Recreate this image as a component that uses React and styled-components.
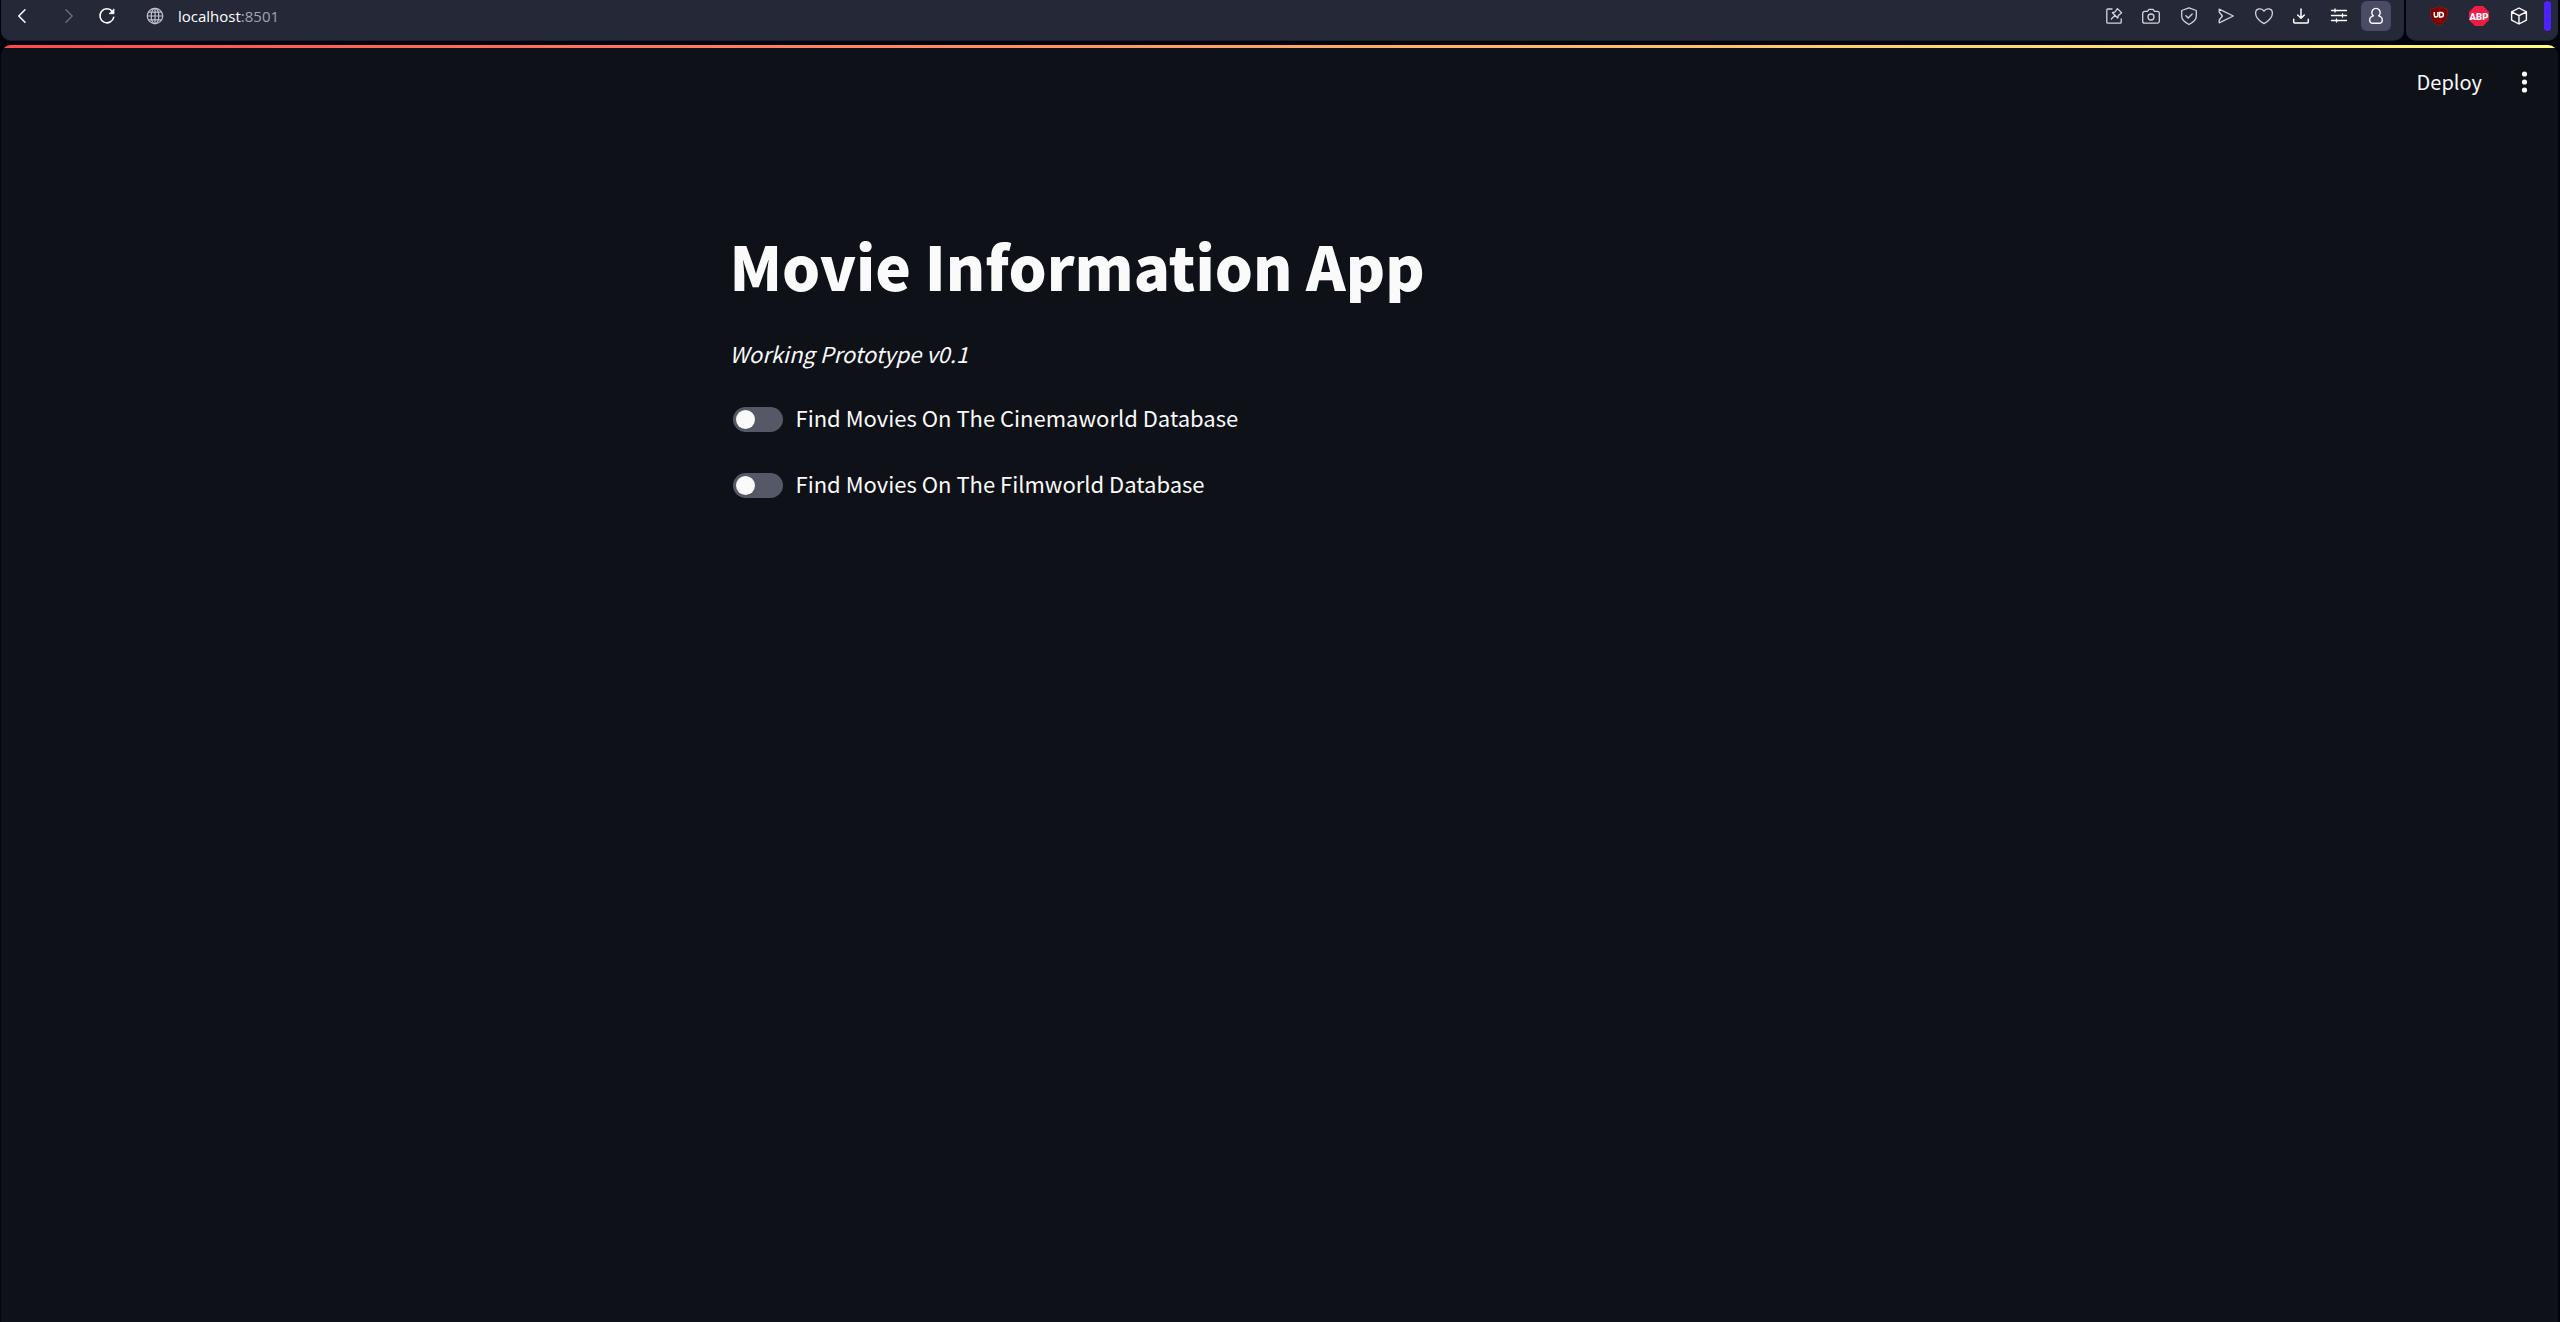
import React from "react";
import styled, { createGlobalStyle } from "styled-components";

const GlobalStyle = createGlobalStyle`
  * { box-sizing: border-box; }
  body { margin: 0; background: #02030f; }
  button, input, label { font-family: inherit; }
`;

const Window = styled.div`
  min-height: 100vh;
  display: flex;
  flex-direction: column;
  padding: 0 2px 0 1px;
  font-family: "Noto Sans CJK SC", "Noto Sans", sans-serif;
  color: #fafafa;
`;

const BrowserBar = styled.div`
  display: flex;
  gap: 2px;
`;

const BarPanel = styled.div`
  display: flex;
  align-items: center;
  flex: ${(p) => (p.$grow ? "1" : "none")};
  height: 41px;
  padding: ${(p) => (p.$grow ? "1px 9px 10px 6px" : "1px 7px 10px 13px")};
  background: #252837;
  border-bottom: 1px solid #1a1d2b;
  border-radius: 0 0 10px 10px;
`;

const IconButton = styled.button`
  display: grid;
  place-items: center;
  width: 30px;
  height: 30px;
  padding: 0;
  border: 0;
  border-radius: 6px;
  background: ${(p) => (p.$active ? "#494c64" : "transparent")};
  color: ${(p) => p.$color || "#d3d5dc"};
`;

const NavGroup = styled.div`
  display: flex;
  gap: ${(p) => p.$gap};
  margin-right: ${(p) => p.$after};
`;

const AddressLink = styled.a`
  flex: 1;
  font: 15px/22px "Open Sans", "Noto Sans", sans-serif;
  color: #fff;
  text-decoration: none;
`;

const Port = styled.span`
  color: #9fa5b4;
`;

const IconStrip = styled.div`
  display: grid;
  grid-template-columns: repeat(${(p) => p.$count}, 1fr);
  justify-items: center;
  width: ${(p) => p.$width};
`;

const SideHandle = styled.div`
  width: 7px;
  height: 30px;
  margin-left: 5px;
  border-radius: 4px;
  background: #4d22ff;
`;

const Page = styled.div`
  flex: 1;
  margin-top: 4px;
  border-radius: 10px 10px 0 0;
  overflow: hidden;
  background: #0e1117;
`;

const Decoration = styled.div`
  height: 3px;
  background: linear-gradient(90deg, #ff4b4b, #fffd80);
`;

const Toolbar = styled.header`
  display: flex;
  justify-content: flex-end;
  align-items: center;
  gap: 28px;
  height: 68px;
  padding-right: 18px;
`;

const DeployButton = styled.button`
  padding: 0;
  border: 0;
  background: transparent;
  color: inherit;
  font-size: 20px;
  line-height: 32px;
`;

const Main = styled.main`
  display: flex;
  flex-direction: column;
  width: 100%;
  max-width: 1100px;
  margin: 0 auto;
  padding-top: 109px;
`;

const Title = styled.h1`
  margin: 0;
  font-size: 60px;
  font-weight: 900;
  line-height: 80px;
`;

const Subtitle = styled.p`
  margin: 32px 0 0;
  font-size: 22px;
  font-style: italic;
  line-height: 32px;
`;

const ToggleList = styled.div`
  display: flex;
  flex-direction: column;
  gap: 34px;
  margin-top: 32px;
`;

const ToggleRow = styled.label`
  display: flex;
  align-items: center;
  gap: 13px;
  padding-left: 3px;
  font-size: 22px;
  line-height: 32px;
`;

const ToggleInput = styled.input`
  appearance: none;
  width: 50px;
  height: 25px;
  margin: 4px 0 0;
  padding: 3px;
  border-radius: 13px;
  background: #555867;

  &::before {
    content: "";
    display: block;
    width: 19px;
    height: 19px;
    border-radius: 50%;
    background: #fafafa;
  }

  &:checked {
    background: #ff4b4b;
  }

  &:checked::before {
    margin-left: 25px;
  }
`;

const Glyph = ({ children, width = 1.3 }) => (
  <svg width="20" height="20" viewBox="0 0 20 20" fill="none" stroke="currentColor" strokeWidth={width} strokeLinecap="round" strokeLinejoin="round" aria-hidden="true">
    {children}
  </svg>
);

const icons = {
  back: <Glyph width={1.5}><path d="M13 3.8 6.8 10l6.2 6.2" /></Glyph>,
  forward: <Glyph width={1.5}><path d="M7 3.8 13.2 10 7 16.2" /></Glyph>,
  reload: <Glyph width={1.6}><path d="M16.8 11.2A7 7 0 1 1 15.4 5.4" /><path d="M17 3.2v4.5h-4.5z" fill="currentColor" strokeWidth=".8" /></Glyph>,
  globe: <Glyph width={1.2}><circle cx="10" cy="10" r="7.7" /><ellipse cx="10" cy="10" rx="3.8" ry="7.7" /><path d="M10 2.3v15.4M2.3 10h15.4M3.5 6.2h13M3.5 13.8h13" /></Glyph>,
  pin: <Glyph><path d="M8 3H3.8a1 1 0 0 0-1 1v12.2a1 1 0 0 0 1 1h12.4a1 1 0 0 0 1-1V13" /><path d="m13.4 2.6 4.2 4.2-3.2 2.6-.7 2.6-5.300-5.300 2.600-.7zM10.900 9.400 7.300 13" /></Glyph>,
  camera: <Glyph><path d="M6.4 5.4 8 3.3h4l1.6 2.1h2.7a2 2 0 0 1 2 2v7.8a2 2 0 0 1-2 2H3.7a2 2 0 0 1-2-2V7.4a2 2 0 0 1 2-2z" /><circle cx="10" cy="11" r="3" /></Glyph>,
  shield: <Glyph><path d="m10 1.8 7.3 2.7v5.7c0 3.6-3 6-7.3 8.3-4.3-2.3-7.3-4.7-7.3-8.3V4.5z" /><path d="m6.9 9.7 2.3 2.3 4-4" /></Glyph>,
  send: <Glyph><path d="M3.2 3.2 17.3 10 3.2 16.8V14L6.4 10 3.2 6z" /></Glyph>,
  heart: <Glyph><path d="M10 17.6C6.5 15.6 1.6 11.8 1.6 7.2c0-4.9 6.2-5.8 8.4-2 2.2-3.8 8.4-2.9 8.4 2 0 4.6-4.9 8.4-8.4 10.4z" /></Glyph>,
  download: <Glyph width={1.5}><path d="M10 3v9M6.7 9l3.3 3.3L13.3 9M2.7 13.2V16a1 1 0 0 0 1 1h12.6a1 1 0 0 0 1-1v-2.8" /></Glyph>,
  sliders: <Glyph width={1.3}><path d="M2.5 4.5h15M2.5 9.5h15M2.5 14.500h15M6 3v3M13.500 8v3M7.500 13v3" /></Glyph>,
  person: <Glyph width={1.4}><path d="M7.400 9.900a4.200 4.200 0 1 1 5.200 0c2.300.5 3.700 1.800 3.700 4 0 2-1.300 3.400-3.300 3.400H7c-2 0-3.300-1.400-3.300-3.400 0-2.200 1.400-3.500 3.700-4z" /></Glyph>,
  cube: <Glyph width={1.4}><path d="m10 2 7.4 3.8v8.4L10 18l-7.4-3.8V5.8zM2.6 5.8 10 9.7l7.4-3.9M10 9.7V18" /></Glyph>,
  blocker: (
    <svg width="20" height="20" viewBox="0 0 20 20" aria-hidden="true">
      <path d="M10 .3c2.5 1.7 5.5 2.4 8.5 2.5 0 7.7.2 12.2-8.5 16.900C1.300 15 1.500 10.500 1.500 2.800 4.500 2.700 7.500 2 10 .3z" fill="#800000" stroke="#6b262d" strokeWidth=".8" />
      <path d="M5.300 6v3.200a1.800 1.800 0 0 0 3.600 0V6" fill="none" stroke="#fff" strokeWidth="1.5" />
      <path d="M10.500 6.500h1.700a2.200 2.200 0 0 1 0 4.400h-1.700z" fill="none" stroke="#fff" strokeWidth="1.5" />
    </svg>
  ),
  abp: (
    <svg width="20" height="20" viewBox="0 0 20 20" aria-hidden="true">
      <path d="M5.9 0h8.2L20 5.9v8.2L14.1 20H5.900L0 14.100V5.900z" fill="#ed1e45" />
      <text x="10" y="13.500" textAnchor="middle" fontFamily="Roboto, sans-serif" fontWeight="900" fontSize="9.500" fill="#fff">ABP</text>
    </svg>
  ),
  menu: (
    <svg width="30" height="30" viewBox="0 0 30 30" fill="currentColor" aria-hidden="true">
      <circle cx="14.500" cy="7" r="2.600" /><circle cx="14.500" cy="15" r="2.600" /><circle cx="14.500" cy="23" r="2.600" />
    </svg>
  ),
};

const tools = [
  ["Edit", "pin"],
  ["Snapshot", "camera"],
  ["Protection", "shield"],
  ["Send", "send"],
  ["Favourite", "heart"],
  ["Downloads", "download", "#fff"],
  ["Easy setup", "sliders", "#fff"],
  ["Profile", "person", "#fff"],
];

const extensions = [
  ["Content blocker", "blocker"],
  ["Ad blocker", "abp"],
  ["Extensions", "cube", "#fff"],
];

const Tool = ({ item: [label, icon, color] }) => (
  <IconButton type="button" aria-label={label} $color={color} $active={icon === "person"}>
    {icons[icon]}
  </IconButton>
);

const toggles = [
  ["cinemaworld", "Find Movies On The Cinemaworld Database"],
  ["filmworld", "Find Movies On The Filmworld Database"],
];

export default function App() {
  return (
    <Window>
      <GlobalStyle />
      <BrowserBar>
        <BarPanel $grow>
          <NavGroup $gap="17px" $after="8px">
            <Tool item={["Back", "back", "#fff"]} />
            <Tool item={["Forward", "forward", "#686b7a"]} />
          </NavGroup>
          <NavGroup $gap="18px" $after="8px">
            <Tool item={["Reload", "reload", "#fff"]} />
            <Tool item={["Site information", "globe", "#bfc2cc"]} />
          </NavGroup>
          <AddressLink href="#">localhost<Port>:8501</Port></AddressLink>
          <IconStrip $count={8} $width="300px">
            {tools.map((t) => <Tool key={t[0]} item={t} />)}
          </IconStrip>
        </BarPanel>
        <BarPanel>
          <IconStrip $count={3} $width="120px">
            {extensions.map((t) => <Tool key={t[0]} item={t} />)}
          </IconStrip>
          <SideHandle />
        </BarPanel>
      </BrowserBar>
      <Page>
        <Decoration />
        <Toolbar>
          <DeployButton type="button">Deploy</DeployButton>
          <IconButton type="button" aria-label="Main menu" $color="#fafafa">{icons.menu}</IconButton>
        </Toolbar>
        <Main>
          <Title>Movie Information App</Title>
          <Subtitle>Working Prototype v0.1</Subtitle>
          <ToggleList>
            {toggles.map(([id, label]) => (
              <ToggleRow key={id} htmlFor={id}>
                <ToggleInput type="checkbox" id={id} />
                {label}
              </ToggleRow>
            ))}
          </ToggleList>
        </Main>
      </Page>
    </Window>
  );
}
